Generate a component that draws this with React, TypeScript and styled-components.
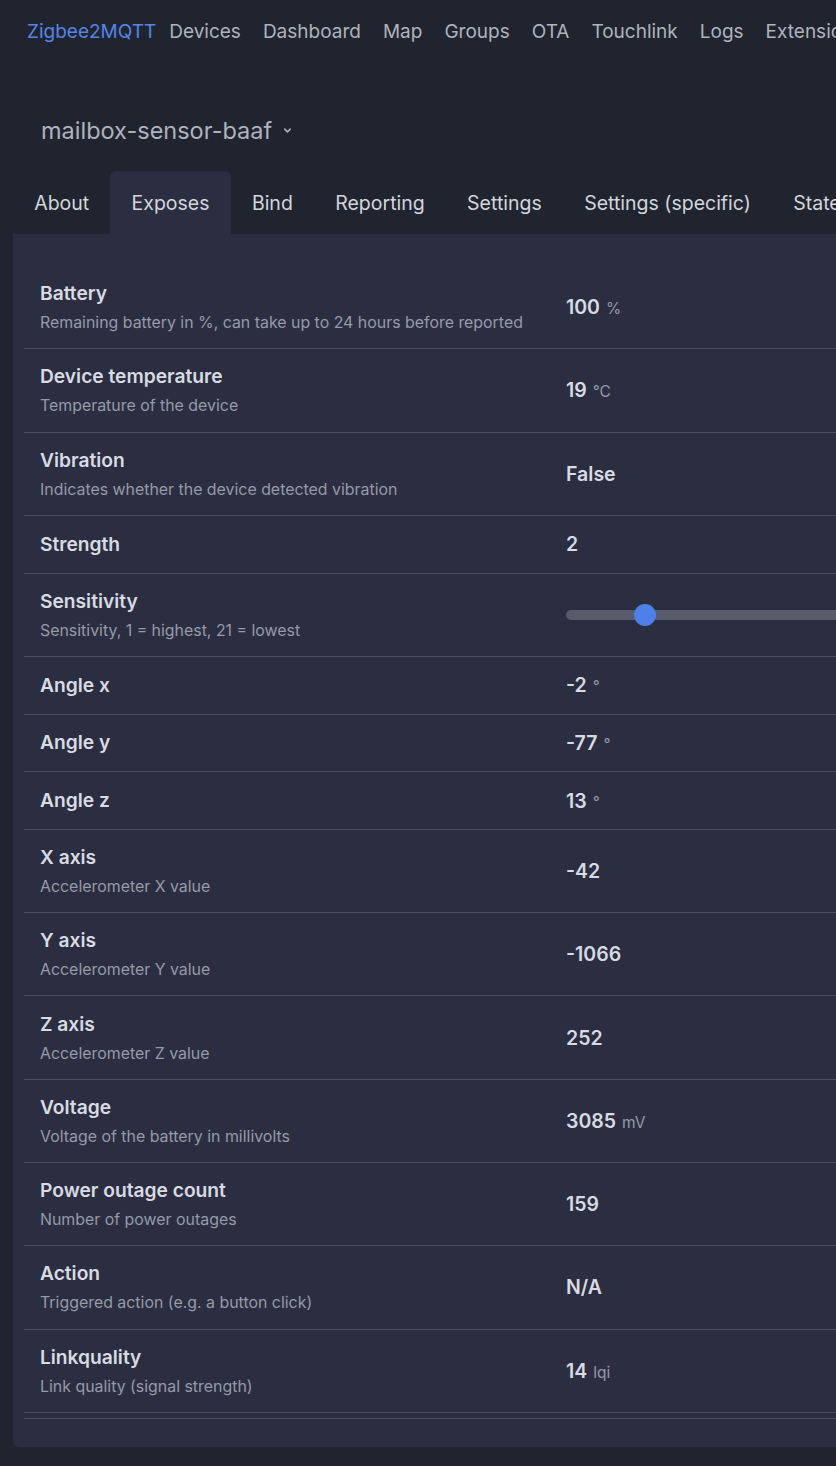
import * as React from 'react';
import styled, {createGlobalStyle} from 'styled-components';

const GlobalStyle = createGlobalStyle`
  html, body {
    margin: 0;
    padding: 0;
    background: #20242f;
    overflow: hidden;
  }
  body {
    font-family: Inter, "Noto Sans", "Liberation Sans", sans-serif;
    color: #a6adbb;
  }
`;

const Page = styled.div`
  width: 1180px;
  min-height: 1466px;
  background: #20242f;
`;

const Navbar = styled.nav`
  display: flex;
  align-items: center;
  gap: 22px;
  height: 62px;
  padding: 0 27px;
  font-size: 19px;
`;

const Brand = styled.a`
  color: #5685e6;
  margin-right: -9px;
  text-decoration: none;
`;

const NavLink = styled.a`
  color: #aeb3bd;
  text-decoration: none;
`;

const DeviceHeader = styled.div`
  display: flex;
  align-items: center;
  gap: 10px;
  margin: 52px 0 25px 41px;
  height: 32px;
  font-size: 23.5px;
  color: #aeb3bd;
`;

const Content = styled.div`
  padding: 0 0 19px 13px;
`;

const Tabs = styled.div`
  display: flex;
  height: 63px;
`;

const Tab = styled.div<{$active?: boolean}>`
  display: flex;
  align-items: center;
  padding: 0 21.2px;
  font-size: 19.5px;
  color: #d3d6dc;
  background: ${p => (p.$active ? '#2a2e40' : 'transparent')};
  border-radius: 6px 6px 0 0;
`;

const Card = styled.div`
  background: #2a2e40;
  border-radius: 0 0 0 6px;
  padding: 32px 0 28px 11px;
`;

const Row = styled.div`
  display: grid;
  grid-template-columns: 526px 1fr;
  align-items: center;
  border-bottom: 1px solid #4a4e5e;
`;

const LabelCell = styled.div<{$single?: boolean}>`
  padding: ${p => (p.$single ? '14.85px' : '14.15px')} 16px;
`;

const Title = styled.div`
  font-size: 19.2px;
  font-weight: 600;
  line-height: 27px;
  color: #d8dbe1;
`;

const Description = styled.div`
  font-size: 15.9px;
  line-height: 22px;
  padding-top: 5px;
  color: #969aa8;
`;

const ValueCell = styled.div`
  padding: 0 16px;
  display: flex;
  align-items: baseline;
  gap: 6px;
`;

const Value = styled.span`
  font-size: 19.5px;
  font-weight: 600;
  color: #d8dbe1;
`;

const Unit = styled.span`
  font-size: 15.5px;
  color: #969aa8;
`;

const SliderTrack = styled.div`
  position: relative;
  width: 100%;
  height: 10px;
  border-radius: 5px;
  background: #575b6a;
`;

const SliderThumb = styled.div`
  position: absolute;
  top: 50%;
  width: 22px;
  height: 22px;
  margin: -11px 0 0 -11px;
  border-radius: 50%;
  background: #4f80ea;
`;

const Spacer = styled.div`
  height: 5px;
  border-bottom: 1px solid #4a4e5e;
`;

type Expose = {
  title: string;
  description?: string;
  value?: string;
  unit?: string;
  slider?: number;
};

const EXPOSES: Expose[] = [
  {title: 'Battery', description: 'Remaining battery in %, can take up to 24 hours before reported', value: '100', unit: '%'},
  {title: 'Device temperature', description: 'Temperature of the device', value: '19', unit: '°C'},
  {title: 'Vibration', description: 'Indicates whether the device detected vibration', value: 'False'},
  {title: 'Strength', value: '2'},
  {title: 'Sensitivity', description: 'Sensitivity, 1 = highest, 21 = lowest', slider: 79},
  {title: 'Angle x', value: '-2', unit: '°'},
  {title: 'Angle y', value: '-77', unit: '°'},
  {title: 'Angle z', value: '13', unit: '°'},
  {title: 'X axis', description: 'Accelerometer X value', value: '-42'},
  {title: 'Y axis', description: 'Accelerometer Y value', value: '-1066'},
  {title: 'Z axis', description: 'Accelerometer Z value', value: '252'},
  {title: 'Voltage', description: 'Voltage of the battery in millivolts', value: '3085', unit: 'mV'},
  {title: 'Power outage count', description: 'Number of power outages', value: '159'},
  {title: 'Action', description: 'Triggered action (e.g. a button click)', value: 'N/A'},
  {title: 'Linkquality', description: 'Link quality (signal strength)', value: '14', unit: 'lqi'},
];

const NAV = ['Devices', 'Dashboard', 'Map', 'Groups', 'OTA', 'Touchlink', 'Logs', 'Extensions'];
const TABS = ['About', 'Exposes', 'Bind', 'Reporting', 'Settings', 'Settings (specific)', 'State'];

function Chevron() {
  return (
    <svg width="11" height="11" viewBox="0 0 12 12" fill="none">
      <path d="M3 4.5 6 7.5 9 4.5" stroke="#aeb3bd" strokeWidth="1.6" strokeLinecap="round" strokeLinejoin="round" />
    </svg>
  );
}

export default function App() {
  return (
    <Page>
      <GlobalStyle />
      <Navbar>
        <Brand>Zigbee2MQTT</Brand>
        {NAV.map(item => (
          <NavLink key={item}>{item}</NavLink>
        ))}
      </Navbar>
      <DeviceHeader>
        mailbox-sensor-baaf
        <Chevron />
      </DeviceHeader>
      <Content>
        <Tabs>
          {TABS.map(tab => (
            <Tab key={tab} $active={tab === 'Exposes'}>
              {tab}
            </Tab>
          ))}
        </Tabs>
        <Card>
          {EXPOSES.map(item => (
            <Row key={item.title}>
              <LabelCell $single={!item.description}>
                <Title>{item.title}</Title>
                {item.description ? <Description>{item.description}</Description> : null}
              </LabelCell>
              <ValueCell>
                {item.slider !== undefined ? (
                  <SliderTrack>
                    <SliderThumb style={{left: `${item.slider}px`}} />
                  </SliderTrack>
                ) : (
                  <>
                    <Value>{item.value}</Value>
                    {item.unit ? <Unit>{item.unit}</Unit> : null}
                  </>
                )}
              </ValueCell>
            </Row>
          ))}
          <Spacer />
        </Card>
      </Content>
    </Page>
  );
}
